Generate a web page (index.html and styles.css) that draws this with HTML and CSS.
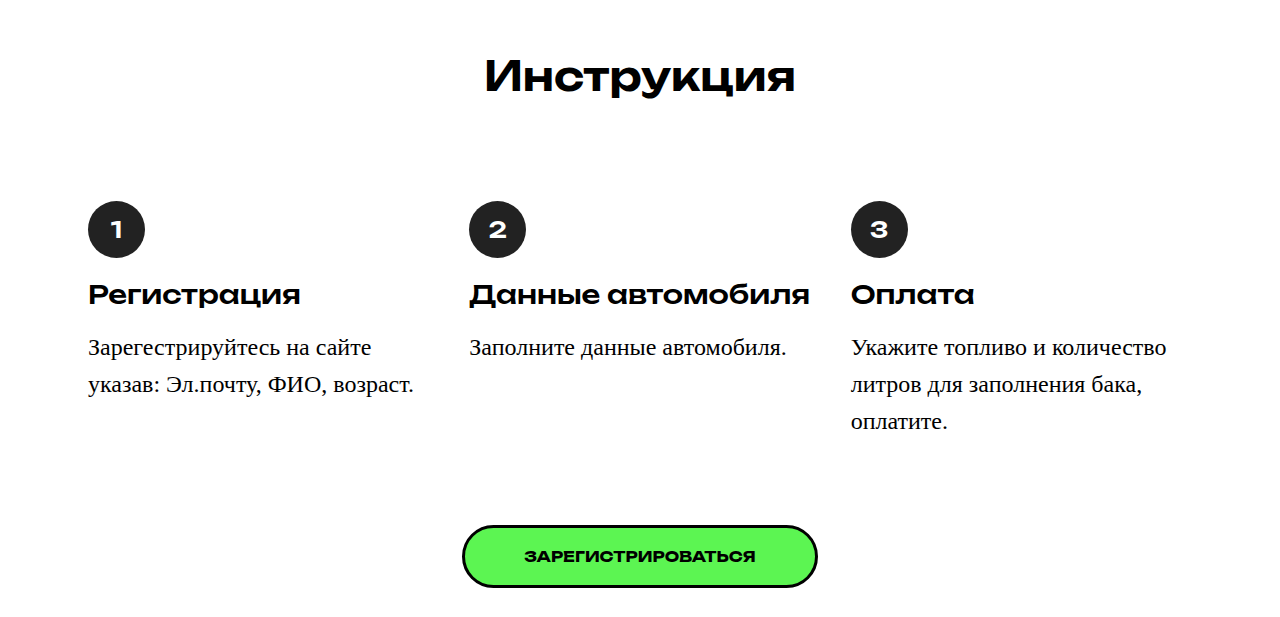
FILE: index.html
```html
<!DOCTYPE html>
<html lang="ru">
<head>
<meta charset="utf-8">
<meta name="viewport" content="width=device-width, initial-scale=1">
<title>Инструкция</title>
<link rel="stylesheet" href="styles.css">
</head>
<body>
<main class="guide">
  <h1 class="guide-title">Инструкция</h1>
  <ol class="steps">
    <li class="step">
      <span class="step-number">1</span>
      <h2 class="step-title">Регистрация</h2>
      <p class="step-text">Зарегестрируйтесь на сайте указав: Эл.почту, ФИО, возраст.</p>
    </li>
    <li class="step">
      <span class="step-number">2</span>
      <h2 class="step-title">Данные автомобиля</h2>
      <p class="step-text">Заполните данные автомобиля.</p>
    </li>
    <li class="step">
      <span class="step-number">3</span>
      <h2 class="step-title">Оплата</h2>
      <p class="step-text">Укажите топливо и количество литров для заполнения бака, оплатите.</p>
    </li>
  </ol>
  <button class="signup" type="button">ЗАРЕГИСТРИРОВАТЬСЯ</button>
</main>
</body>
</html>
```

FILE: styles.css
```css
* {
  box-sizing: border-box;
}

body {
  margin: 0;
  background: #fff;
  color: #000;
  font-family: "Liberation Serif", "Times New Roman", serif;
}

.guide {
  display: flex;
  flex-direction: column;
  align-items: center;
  max-width: 1184px;
  margin: 0 auto;
  padding: 44px 20px 28px;
}

.guide-title,
.step-number,
.step-title,
.signup {
  font-family: Unbounded, "DejaVu Sans", sans-serif;
  font-weight: 600;
}

.guide-title {
  margin: 0;
  font-size: 40px;
  line-height: 64px;
}

.steps {
  display: grid;
  grid-template-columns: repeat(3, minmax(0, 1fr));
  width: 100%;
  margin: 93px 0 0;
  padding: 0;
  list-style: none;
}

.step {
  padding: 0 20px;
}

.step-number {
  display: flex;
  align-items: center;
  justify-content: center;
  width: 57px;
  height: 57px;
  border-radius: 50%;
  background: #222;
  color: #fff;
  font-size: 22px;
}

.step-title {
  margin: 18px 0 17px;
  font-size: 26px;
  font-weight: 500;
  line-height: 36px;
  white-space: nowrap;
}

.step-text {
  margin: 0;
  font-size: 24px;
  line-height: 37px;
}

.signup {
  margin-top: 85px;
  padding: 0 59px;
  border: 3px solid #000;
  border-radius: 32px;
  background: #5cf552;
  color: #000;
  font-size: 15px;
  font-weight: 700;
  line-height: 57px;
}
```
